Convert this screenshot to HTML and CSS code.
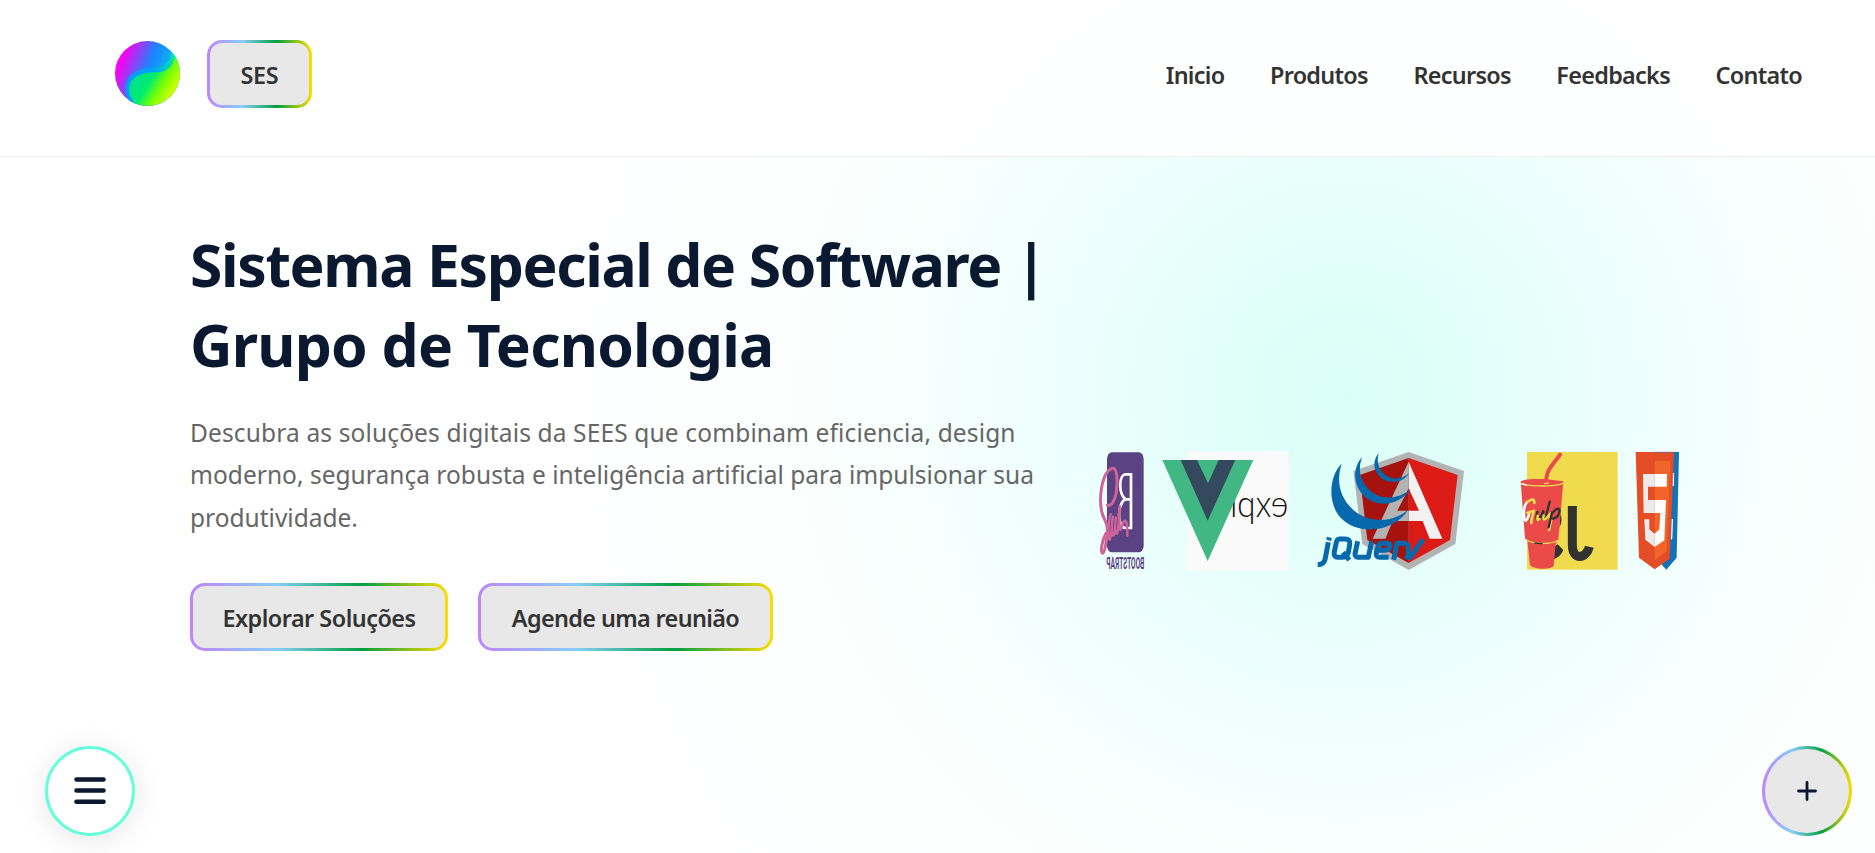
FILE: index.html
```html
<!DOCTYPE html>
<html lang="pt-BR">
<head>
<meta charset="utf-8">
<title>SES</title>
<link rel="stylesheet" href="styles.css">
</head>
<body>
<header class="header">
  <div class="brand">
    <svg class="logo" viewBox="0 0 195 195">
      <defs>
        <linearGradient id="lg1" gradientUnits="userSpaceOnUse" x1="8" y1="55" x2="150" y2="115"><stop offset="0" stop-color="#f0e"/><stop offset=".12" stop-color="#e80cf0"/><stop offset=".6" stop-color="#1a84ff"/><stop offset="1" stop-color="#0cb8ec"/></linearGradient>
        <linearGradient id="lg2" gradientUnits="userSpaceOnUse" x1="60" y1="100" x2="165" y2="165"><stop offset="0" stop-color="#00e090"/><stop offset=".4" stop-color="#00ec70"/><stop offset=".68" stop-color="#70ff08"/><stop offset="1" stop-color="#d0ff00"/></linearGradient>
        <linearGradient id="lg3" gradientUnits="userSpaceOnUse" x1="30" y1="130" x2="180" y2="60"><stop offset="0" stop-color="#0898ff"/><stop offset=".55" stop-color="#00a0f8"/><stop offset="1" stop-color="#00e8a0"/></linearGradient>
        <clipPath id="lc"><circle cx="97.500" cy="97.500" r="97.500"/></clipPath>
      </defs>
      <g clip-path="url(#lc)">
        <rect width="195" height="195" fill="url(#lg1)"/>
        <path d="M168 36C168 62 150 78 118 80C72 80 34 96 31 138C30 160 42 184 62 200H200V30Z" fill="url(#lg3)"/>
        <path d="M178 50C174 78 154 94 120 94C74 94 44 112 42 140C40 162 52 180 72 200H200V60Z" fill="url(#lg2)"/>
      </g>
    </svg>
    <a class="btn btn-brand">SES</a>
  </div>
  <nav class="nav"><a>Inicio</a><a>Produtos</a><a>Recursos</a><a>Feedbacks</a><a>Contato</a></nav>
</header>
<main class="hero">
  <section class="copy">
    <h1><span class="h-a">Sistema Especial de Software |</span><br><span class="h-b">Grupo de Tecnologia</span></h1>
    <p><span class="p-a">Descubra as soluções digitais da SEES que combinam eficiencia, design</span><br><span class="p-b">moderno, segurança robusta e inteligência artificial para impulsionar sua</span><br>produtividade.</p>
    <div class="actions"><a class="btn btn-a">Explorar Soluções</a><a class="btn btn-b">Agende uma reunião</a></div>
  </section>
  <svg class="stage" viewBox="0 0 1860 480">
    <!-- bootstrap, seen from behind -->
    <rect x="81" y="67" width="110" height="300" rx="15" ry="20" fill="#5b4282"/>
    <path d="M153 133H137C117 133 114 190 137 208C112 216 110 294 137 294H153ZM154 208H137" fill="none" stroke="#fff" stroke-width="8"/>
    <text transform="translate(193 417) scale(-.61 1)" class="bs" textLength="187" lengthAdjust="spacingAndGlyphs">BOOTSTRAP</text>
    <!-- sass -->
    <g fill="none" stroke="#cf649a" stroke-linecap="round" stroke-linejoin="round">
      <path d="M82 226C100 230 112 195 111 150C110 110 99 108 84 124C64 147 57 205 65 244C70 270 85 277 82 303C80 327 75 370 68 370C61 369 64 335 78 310" stroke-width="9"/>
      <path d="M92 252C86 270 83 329 89 329C96 320 95 268 99 260C95 280 94 323 101 316C107 305 104 274 108 262C104 285 105 320 112 309C117 292 115 252 119 228C120 250 116 306 122 299C129 280 127 275 135 272C142 275 142 290 142 317" stroke-width="7"/>
    </g>
    <!-- express, seen from behind -->
    <rect x="322" y="64" width="304" height="358" fill="#fafafa"/>
    <text transform="translate(625 262) scale(-1 1)" class="ex" textLength="238" lengthAdjust="spacingAndGlyphs">expre</text>
    <!-- vue -->
    <path d="M247 90H520L383 393Z" fill="#41b883"/>
    <path d="M302 90H351L384 160L416 90H466L383 272Z" fill="#34495e"/>
    <!-- angular -->
    <g transform="translate(630 0)">
      <path d="M356 66L522 123L496 342L356 420L217 342L190 123Z" fill="#b3b3b3"/>
      <path d="M356 84L503 135L480 330L356 399Z" fill="#dd1b16"/>
      <path d="M356 84V399L232 330L209 135Z" fill="#a6120d"/>
      <path d="M356 95L457 326H419L398 273H356V242H387L356 175Z" fill="#f2f2f2"/>
      <path d="M356 95V175L322 242H356V273H308L286 326H248Z" fill="#b3b3b3"/>
      <!-- jquery -->
      <g fill="#0868ac">
        <path d="M155 101C120 133 110 215 150 261C203 320 315 307 356 237C315 278 238 282 189 239C149 203 138 153 155 101Z"/>
        <path d="M216 82C190 110 188 157 215 190C250 235 325 232 362 177C322 210 270 212 236 178C210 151 203 118 216 82Z"/>
        <path d="M266 69C249 91 249 114 265 135C287 164 339 163 357 130C331 152 298 150 279 128C264 111 260 94 266 69Z"/>
      </g>
      <g fill="none" stroke="#0868ac" stroke-width="15" stroke-linejoin="round">
        <path d="M115 337L105 389Q101 404 83 404M118 322L116 331M148 327H165Q182 327 179 344L175 367Q171 382 154 382H144Q130 382 133 365L138 341Q140 327 148 327M159 367L178 390M203 334L195 371Q194 382 207 382H235L245 334M270 382H296M270 382Q256 382 259 367L264 349Q267 340 279 340H293Q302 341 299 350Q297 361 285 361H262M311 389L321 340H352M354 339L355 371L361 382L399 328M361 366L348 387"/>
      </g>
    </g>
    <g transform="translate(1230 0)">
      <!-- javascript -->
      <rect x="111" y="66" width="272" height="353" fill="#f0db4f"/>
      <path d="M247 228V345C247 394 290 386 298 350" fill="none" stroke="#323330" stroke-width="27"/>
      <path d="M203 343L220 360Q211 382 190 388V352ZM211 250Q219 272 208 294Z" fill="#323330"/>
      <!-- gulp -->
      <path d="M168 152Q171 125 181 113L210 74" fill="none" stroke="#eb4a4b" stroke-width="12" stroke-linecap="round" stroke-linejoin="round"/>
      <path d="M92 154C100 147 140 146 170 148L220 154L205 331L197 342L191 408C180 420 130 419 120 405L113 342L105 325Z" fill="#eb4a4b"/>
      <path d="M94 161C125 170 190 171 219 160M106 327C122 343 188 344 204 331M163 161L176 159" fill="none" stroke="#f0db4f" stroke-width="4"/>
      <path d="M94 161L111 166M106 330L112 339" stroke="#fff" stroke-width="4"/>
      <path d="M133 339L158 341" stroke="#323330" stroke-width="4"/>
      <g fill="none" stroke-width="8" stroke-linecap="round" stroke-linejoin="round">
        <path d="M111 216Q98 231 103 267Q108 281 117 253" stroke="#fff"/>
        <path d="M112 216Q133 200 133 219M112 248L132 242Q124 267 124 279" stroke="#f0db4f"/>
        <path d="M142 246Q136 275 147 269L160 243Q155 276 166 266L179 215" stroke="#323330" stroke-width="7"/>
        <path d="M143 257Q139 277 149 267M161 256Q156 275 169 265L182 249Q176 272 184 270L177 301" stroke="#f0db4f" stroke-width="7"/>
        <path d="M186 247L176 292M186 251Q203 228 209 241Q207 264 188 266" stroke="#323330" stroke-width="7"/>
      </g>
      <!-- css behind html -->
      <path d="M488 66H567L560 383L529 419L510 398Z" fill="#1572b6"/>
      <path d="M437 66H552L539 386L494 418L447 383Z" fill="#e44d26"/>
      <path d="M494 93H541L530 363L494 391Z" fill="#f16529"/>
      <path d="M489 67H552" stroke="#86666c" stroke-width="3"/>
      <path d="M494 132V170H474V210H494V249H461L459 132ZM463 268H478V298L494 311V351L466 329Z" fill="#ebebeb"/>
      <path d="M494 132H531L530 170H494ZM494 210H528L523 331L494 351V311L508 298L511 249H494ZM549 129H552V168H548ZM545 267H549L547 326L543 330Z" fill="#fff"/>
    </g>
  </svg>
</main>
<a class="fab fab-menu"><svg viewBox="0 0 32 30"><path d="M2.500 3.500H29.500M2.500 14.500H29.500M2.500 25.700H29.500"/></svg></a>
<a class="fab fab-plus"><svg viewBox="0 0 20 20"><path d="M10 1.500V18.500M1.500 10H18.500"/></svg></a>
</body>
</html>
```
FILE: styles.css
```css
* { box-sizing: border-box; }
body {
  margin: 0;
  height: 853px;
  overflow: hidden;
  font-family: "Noto Sans", "Open Sans", sans-serif;
  color: #333;
  background: radial-gradient(circle at 1345px 395px, #d8fff7 0, #e5fffa 180px, #f1fffc 340px, #fafffe 520px, #fff 780px) #fff;
}
.header {
  height: 157px;
  padding: 40px 73px 0 115px;
  display: flex;
  justify-content: space-between;
  align-items: flex-start;
  background: rgba(255, 255, 255, .9);
  border-bottom: 1px solid #eee;
}
.brand { display: flex; gap: 27px; }
.logo { width: 65px; height: 65px; margin-top: 1px; }
.btn {
  height: 68px;
  display: flex;
  align-items: center;
  justify-content: center;
  padding-top: 2px;
  border: 3px solid transparent;
  border-radius: 15px;
  font-size: 23.4px;
  font-weight: 600;
  white-space: nowrap;
  background: linear-gradient(#e8e8e8, #e8e8e8) padding-box, linear-gradient(90deg, #c084fc, #87cefa 33.300%, #00a040 66.600%, #ffdd00) border-box;
}
.btn-brand { width: 105px; letter-spacing: -.3px; }
.btn-a { width: 258px; letter-spacing: -.5px; }
.btn-b { width: 295px; letter-spacing: -.62px; }
.nav { display: flex; gap: 45.500px; height: 68px; padding-top: 2px; align-items: center; font-size: 23.4px; font-weight: 600; letter-spacing: -.7px; }
.nav a { white-space: nowrap; }
.hero { display: flex; padding: 67px 0 0 190px; align-items: flex-start; }
.copy { width: 890px; }
h1 { margin: 0; font-size: 58.800px; line-height: 80px; font-weight: 700; color: #0a192f; white-space: nowrap; }
.h-a { letter-spacing: -1.370px; }
.h-b { letter-spacing: -.780px; }
p { margin: 28px 0 44px; font-size: 24.500px; line-height: 42.400px; color: #666; white-space: nowrap; }
.p-a { letter-spacing: .140px; }
.p-b { letter-spacing: .030px; }
.actions { display: flex; gap: 30px; }
.stage { width: 620px; height: 160px; margin-top: 206px; }
.bs { font: 700 47px "Roboto", sans-serif; fill: #5b4282; }
.ex { font: 300 112px "Lato", sans-serif; fill: #111; }
.fab { position: fixed; bottom: 17px; width: 90px; height: 90px; border-radius: 50%; display: flex; align-items: center; justify-content: center; border: 3px solid transparent; }
.fab path { fill: none; stroke: #0a192f; stroke-linecap: round; }
.fab-menu { left: 45px; border-color: #64ffda; background: #fff; box-shadow: 0 4px 30px rgba(0, 0, 0, .1); }
.fab-menu svg { width: 32px; height: 30px; }
.fab-menu path { stroke-width: 4.600px; }
.fab-plus { right: 23px; background: linear-gradient(#e8e8e8, #e8e8e8) padding-box, linear-gradient(90deg, #c084fc, #87cefa 33.300%, #00a040 66.600%, #ffdd00) border-box; }
.fab-plus svg { width: 20px; height: 20px; }
.fab-plus path { stroke-width: 2.800px; }
```
